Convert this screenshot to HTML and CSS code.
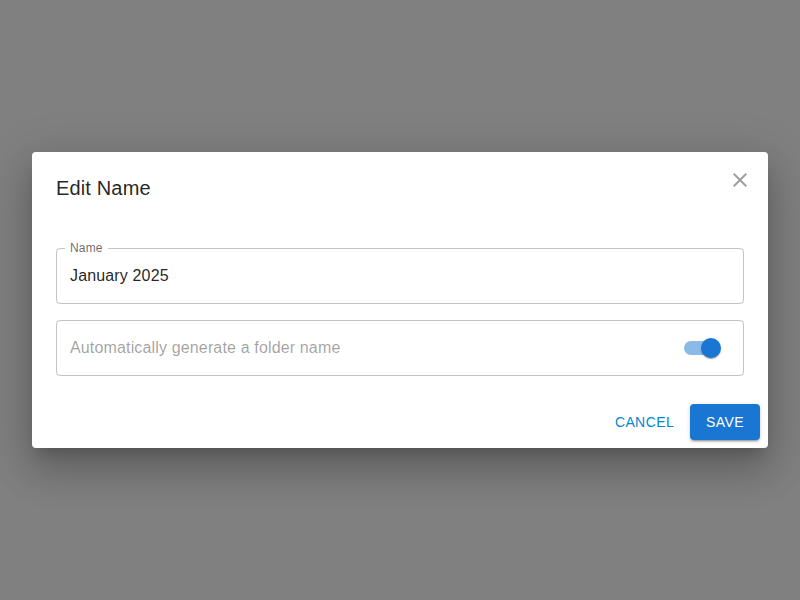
FILE: index.html
```html
<!DOCTYPE html>
<html>
<head>
<meta charset="utf-8">
<link rel="stylesheet" href="styles.css">
</head>
<body>
<div class="backdrop">
  <div class="dialog">
    <h2 class="title">Edit Name</h2>
    <button class="close" aria-label="close">
      <svg viewBox="0 0 24 24" width="24" height="24"><path d="M19 6.41 17.59 5 12 10.59 6.41 5 5 6.41 10.59 12 5 17.59 6.41 19 12 13.41 17.59 19 19 17.59 13.41 12z" fill="currentColor"/></svg>
    </button>
    <div class="content">
      <div class="field">
        <span class="label">Name</span>
        <span class="value">January 2025</span>
      </div>
      <div class="field toggle-field">
        <span class="placeholder">Automatically generate a folder name</span>
        <span class="switch"><span class="track"></span><span class="thumb"></span></span>
      </div>
    </div>
    <div class="actions">
      <button class="btn text">Cancel</button>
      <button class="btn contained">Save</button>
    </div>
  </div>
</div>
</body>
</html>
```

FILE: styles.css
```css
* { box-sizing: border-box; }
html, body { margin: 0; height: 100%; }
body { font-family: "Liberation Sans", Arial, sans-serif; background: #808080; }
.backdrop { height: 100%; display: flex; align-items: center; justify-content: center; }
.dialog {
  position: relative;
  width: 736px;
  background: #fff;
  border-radius: 4px;
  box-shadow: 0 11px 15px -7px rgba(0,0,0,0.2), 0 24px 38px 3px rgba(0,0,0,0.14), 0 9px 46px 8px rgba(0,0,0,0.12);
  display: flex;
  flex-direction: column;
}
.title {
  margin: 0;
  padding: 20px 24px 0;
  font-size: 20px;
  font-weight: 400;
  line-height: 32px;
  letter-spacing: 0.15px;
  color: rgba(0,0,0,0.87);
}
.close {
  position: absolute;
  top: 8px;
  right: 8px;
  width: 40px;
  height: 40px;
  border: 0;
  background: transparent;
  padding: 8px;
  color: #9e9e9e;
  display: flex;
  align-items: center;
  justify-content: center;
}
.close svg { display: block; }
.content {
  padding: 44px 24px 20px;
  display: flex;
  flex-direction: column;
  gap: 16px;
}
.field {
  position: relative;
  height: 56px;
  border: 1px solid rgba(0,0,0,0.23);
  border-radius: 4px;
  padding: 0 13px;
  display: flex;
  align-items: center;
}
.label {
  position: absolute;
  left: 8px;
  top: -8px;
  padding: 0 5px;
  background: #fff;
  font-size: 12px;
  line-height: 14px;
  letter-spacing: 0.15px;
  color: rgba(0,0,0,0.6);
}
.value { font-size: 16px; letter-spacing: 0.15px; color: rgba(0,0,0,0.87); }
.placeholder { font-size: 16px; letter-spacing: 0.15px; color: rgba(0,0,0,0.38); flex: 1; }
.toggle-field { padding-right: 22px; }
.switch { position: relative; width: 37px; height: 20px; flex: none; }
.track {
  position: absolute; left: 0; top: 3px;
  width: 34px; height: 14px; border-radius: 7px;
  background: #1976d2; opacity: 0.5;
}
.thumb {
  position: absolute; right: 0; top: 0;
  width: 20px; height: 20px; border-radius: 50%;
  background: #1976d2;
  box-shadow: 0 2px 1px -1px rgba(0,0,0,0.2), 0 1px 1px 0 rgba(0,0,0,0.14), 0 1px 3px 0 rgba(0,0,0,0.12);
}
.actions {
  padding: 8px;
  display: flex;
  justify-content: flex-end;
  gap: 8px;
}
.btn {
  font-family: "Liberation Sans", Arial, sans-serif;
  font-size: 14px;
  font-weight: 400;
  letter-spacing: 0.4px;
  text-transform: uppercase;
  border: 0;
  border-radius: 4px;
  height: 36px;
  line-height: 20px;
  cursor: pointer;
}
.btn.text { background: transparent; color: #0288d1; padding: 6px 8px; }
.btn.contained {
  background: #1976d2; color: #fff; padding: 8px 16px;
  box-shadow: 0 3px 1px -2px rgba(0,0,0,0.2), 0 2px 2px 0 rgba(0,0,0,0.14), 0 1px 5px 0 rgba(0,0,0,0.12);
}
```
